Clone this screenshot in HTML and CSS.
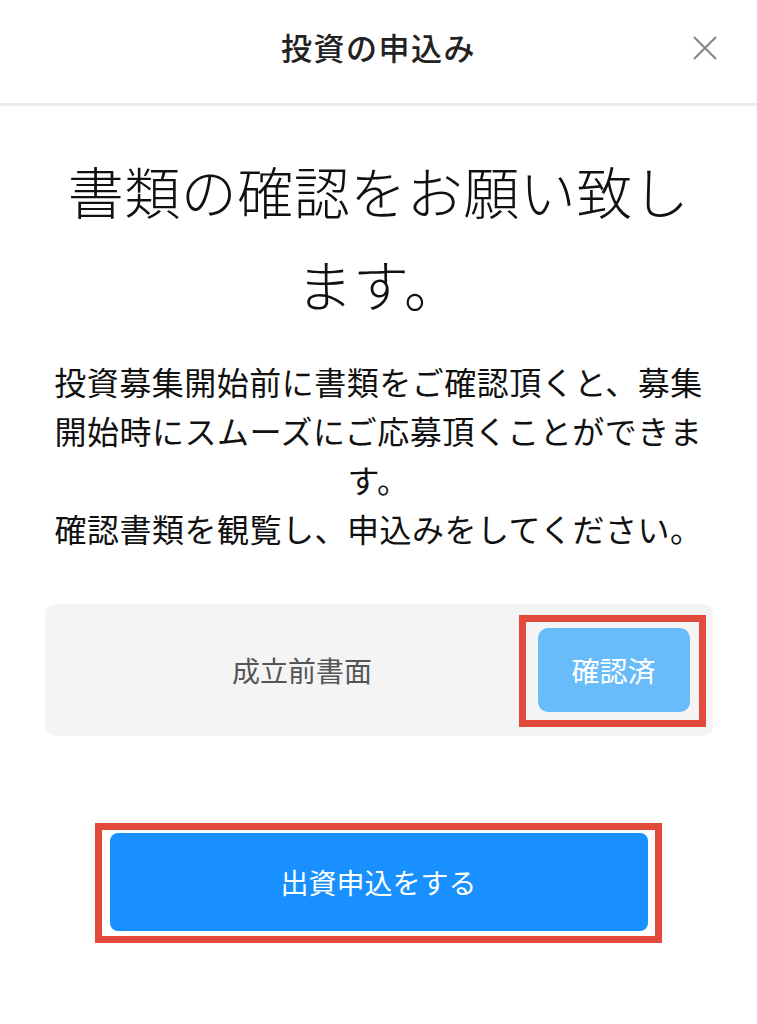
FILE: index.html
```html
<!DOCTYPE html>
<html lang="ja">
<head>
<meta charset="utf-8">
<title>投資の申込み</title>
<link rel="stylesheet" href="styles.css">
</head>
<body>
<header class="topbar">
  <h1 class="topbar-title">投資の申込み</h1>
  <button class="close" aria-label="閉じる">
    <svg width="26" height="26" viewBox="0 0 26 26"><path d="M2 2 L24 24 M24 2 L2 24" stroke="#8a8a8a" stroke-width="2.2" fill="none"/></svg>
  </button>
</header>
<main class="content">
  <h2 class="heading">書類の確認をお願い致します。</h2>
  <p class="lead">投資募集開始前に書類をご確認頂くと、募集開始時にスムーズにご応募頂くことができます。<br>確認書類を観覧し、申込みをしてください。</p>
  <div class="doc-card">
    <span class="doc-name">成立前書面</span>
    <div class="mark-wrap">
      <button class="confirmed">確認済</button>
      <span class="mark mark-small"></span>
    </div>
  </div>
  <div class="submit-wrap">
    <button class="submit">出資申込をする</button>
    <span class="mark mark-large"></span>
  </div>
</main>
</body>
</html>
```
FILE: styles.css
```css
* { box-sizing: border-box; }
html, body { margin: 0; padding: 0; background: #fff; }
body {
  font-family: "Noto Sans CJK JP", "Noto Sans", sans-serif;
  color: #1a1a1a;
  width: 757px;
  min-height: 1024px;
}
.topbar {
  height: 106px;
  border-bottom: 3px solid #ebebeb;
  display: flex;
  align-items: center;
  justify-content: center;
  position: relative;
}
.topbar-title {
  margin: 0;
  margin-top: -10px;
  font-size: 31px;
  font-weight: 500;
  color: #222;
  letter-spacing: 1.5px;
}
.close {
  position: absolute;
  right: 39px;
  top: 35px;
  width: 26px;
  height: 26px;
  padding: 0;
  border: 0;
  background: none;
  display: flex;
}
.content {
  padding: 0 50px 90px;
  display: flex;
  flex-direction: column;
  align-items: center;
}
.heading {
  margin: 37px 0 0;
  font-size: 56px;
  line-height: 93px;
  font-weight: 200;
  letter-spacing: 0.5px;
  text-align: center;
  color: #111;
}
.lead {
  margin: 28px 0 0;
  font-size: 32px;
  line-height: 49px;
  letter-spacing: 0.5px;
  text-align: center;
  color: #111;
  font-weight: 400;
}
.doc-card {
  margin-top: 51px;
  width: 668px;
  height: 132px;
  background: #f4f4f4;
  border-radius: 10px;
  display: flex;
  align-items: center;
  padding: 0 23px 0 22px;
}
.doc-name {
  flex: 1;
  text-align: center;
  font-size: 28px;
  color: #555;
}
.mark-wrap, .submit-wrap { position: relative; display: flex; }
.confirmed {
  width: 152px;
  height: 84px;
  border: 0;
  border-radius: 10px;
  background: #69bcfa;
  color: #fff;
  font-family: inherit;
  font-size: 28px;
  padding: 0;
}
.submit-wrap { margin-top: 97px; }
.submit {
  width: 538px;
  height: 98px;
  border: 0;
  border-radius: 8px;
  background: #1890ff;
  color: #fff;
  font-family: inherit;
  font-size: 28px;
  padding: 0;
}
.mark {
  position: absolute;
  border: 7px solid #e24b3b;
  pointer-events: none;
}
.mark-small { left: -19px; top: -13px; right: -16px; bottom: -15px; }
.mark-large { left: -15px; top: -10px; right: -14px; bottom: -12px; }
```
